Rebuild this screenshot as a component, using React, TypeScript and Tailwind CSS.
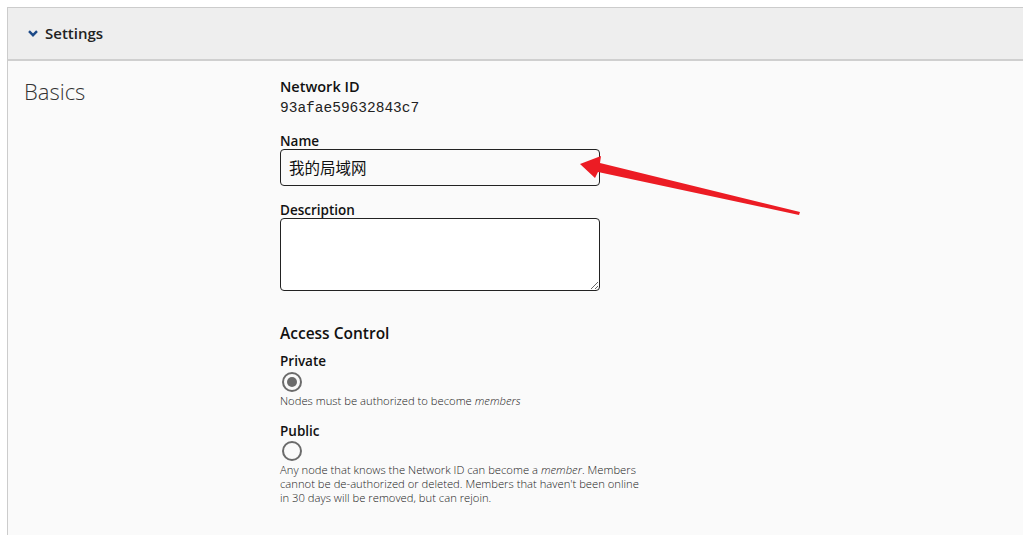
// App.tsx
import React from "react";

const font = { fontFamily: '"Open Sans", "Noto Sans CJK SC", sans-serif' };

const Radio = ({ checked }: { checked?: boolean }) => (
  <span className="flex h-[20px] w-[20px] items-center justify-center rounded-full border-2 border-[#6b6b6b] bg-[#fafafa]">
    {checked && <span className="h-[10px] w-[10px] rounded-full bg-[#6b6b6b]" />}
  </span>
);

const App: React.FC = () => {
  return (
    <div className="relative min-h-screen bg-white pl-[7px] pt-[7px] text-[#111]" style={font}>
      <div className="min-h-[528px] border-l border-t border-[#cccccc] bg-[#fafafa]">
        {/* header */}
        <div className="flex h-[53px] items-center border-b-2 border-[#cfcfcf] bg-[#eeeeee] pl-[20px]">
          <svg width="10" height="7" viewBox="0 0 10 7" className="mr-[7px] mt-[-1px]">
            <path d="M1 1.2 L5 5.2 L9 1.2" fill="none" stroke="#1d4a88" strokeWidth="2.4" />
          </svg>
          <span className="text-[15px] font-semibold text-[#222]">Settings</span>
        </div>

        {/* body */}
        <div className="flex">
          <div className="w-[272px] shrink-0 pl-[16px] pt-[14px]">
            <h2 className="text-[22px] font-light leading-[32px] text-[#333]">Basics</h2>
          </div>

          <div className="pt-[16px]">
            <div className="text-[14.5px] font-semibold leading-[20px]">Network ID</div>
            <div className="mt-[1px] text-[14.5px] leading-[20px] text-[#222]" style={{ fontFamily: '"Liberation Mono", monospace' }}>
              93afae59632843c7
            </div>

            <div className="mt-[15px] text-[13.5px] font-semibold leading-[16px]">Name</div>
            <input
              defaultValue="我的局域网"
              className="block h-[37px] w-[320px] rounded-[4px] border border-[#222] bg-[#fafafa] px-[8px] text-[15.5px] text-[#111] outline-none"
              style={font}
            />

            <div className="mt-[16px] text-[13.5px] font-semibold leading-[16px]">Description</div>
            <textarea className="block h-[73px] w-[320px] rounded-[4px] border border-[#222] bg-white outline-none" />

            <div className="mt-[32px] text-[15.5px] font-semibold leading-[20px]">Access Control</div>

            <div className="mt-[10px] text-[13.5px] font-semibold leading-[16px]">Private</div>
            <div className="ml-[2px] mt-[3px]">
              <Radio checked />
            </div>
            <div className="mt-[2px] text-[11.25px] font-light leading-[14px] text-[#222]">
              Nodes must be authorized to become <em>members</em>
            </div>

            <div className="mt-[15px] text-[13.5px] font-semibold leading-[16px]">Public</div>
            <div className="ml-[2px] mt-[2px]">
              <Radio />
            </div>
            <div className="mt-[2px] text-[11.25px] font-light leading-[14px] text-[#222]">
              <div className="whitespace-nowrap">
                Any node that knows the Network ID can become a <em>member</em>. Members
              </div>
              <div className="whitespace-nowrap">cannot be de-authorized or deleted. Members that haven't been online</div>
              <div className="whitespace-nowrap">in 30 days will be removed, but can rejoin.</div>
            </div>
          </div>
        </div>
      </div>

      {/* annotation arrow */}
      <svg className="pointer-events-none absolute left-0 top-0" width="1023" height="535">
        <polygon
          points="580,164 601,156 600,163 800,212 799,215 598,172 595,178"
          fill="#ec1c24"
        />
      </svg>
    </div>
  );
};

export default App;
